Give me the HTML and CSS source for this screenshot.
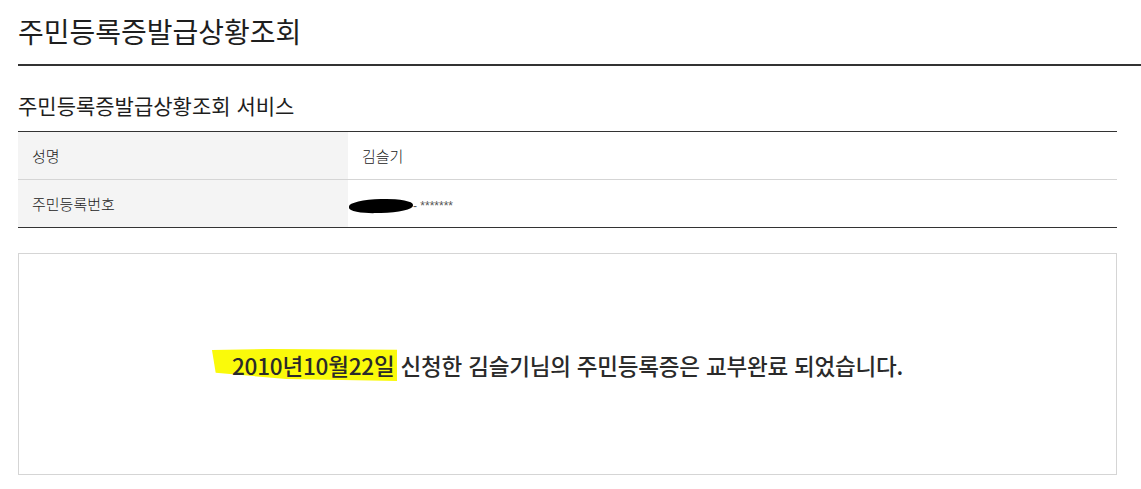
FILE: index.html
```html
<!DOCTYPE html>
<html lang="ko">
<head>
<meta charset="UTF-8">
<meta name="viewport" content="width=device-width, initial-scale=1.0">
<title>주민등록증발급상황조회</title>
<link rel="stylesheet" href="styles.css">
</head>
<body>

<div class="page">
  <h1 class="page-title">주민등록증발급상황조회</h1>

  <div class="content">
    <h2 class="section-title">주민등록증발급상황조회 서비스</h2>

    <table class="info-table">
      <tr>
        <th>성명</th>
        <td>김슬기</td>
      </tr>
      <tr>
        <th>주민등록번호</th>
        <td><span class="redact"></span><span class="masked">- *******</span></td>
      </tr>
    </table>

    <div class="result-box">
      <p class="result-text"><span class="marker">2010년10월22일</span> 신청한 김슬기님의 주민등록증은 교부완료 되었습니다.</p>
    </div>
  </div>
</div>

</body>
</html>
```

FILE: styles.css
```css
/* 주민등록증 발급상황 조회 */
body {
  font-family: "Noto Sans CJK KR", "Noto Sans", sans-serif;
  color: #333;
  background-color: #fff;
  margin: 0;
  padding: 0;
}
.page {
  padding-left: 18px;
}
.page-title {
  margin: 0;
  padding-top: 12px;
  height: 52px;
  font-size: 28px;
  font-weight: 400;
  line-height: 38px;
  color: #1e1e1e;
  border-bottom: 2px solid #333;
  box-sizing: content-box;
}
.content {
  padding-right: 24px;
}
.section-title {
  margin: 0;
  padding-top: 24px;
  height: 41px;
  font-size: 21px;
  font-weight: 400;
  line-height: 30px;
  color: #1e1e1e;
}
.info-table {
  width: 100%;
  border-collapse: collapse;
  border-top: 1px solid #333;
  border-bottom: 1px solid #333;
}
.info-table th,
.info-table td {
  height: 47px;
  padding: 0 14px;
  font-size: 15px;
  font-weight: 300;
  text-align: left;
  color: #222;
  border-bottom: 1px solid #d5d5d5;
}
.info-table tr:last-child th,
.info-table tr:last-child td {
  border-bottom: none;
}
.info-table th {
  width: 302px;
  background-color: #f4f4f4;
}
.redact {
  display: inline-block;
  width: 64px;
  height: 14px;
  margin-left: -13px;
  vertical-align: middle;
  background-color: #000;
  border-radius: 50% 45% 50% 40%;
  transform: rotate(-1deg);
}
.masked {
  font-family: "Liberation Sans", Arial, sans-serif;
  font-size: 12px;
  color: #555;
  vertical-align: middle;
}
.result-box {
  margin-top: 25px;
  height: 220px;
  border: 1px solid #d5d5d5;
  display: flex;
  align-items: center;
  justify-content: center;
}
.result-text {
  position: relative;
  z-index: 0;
  margin: 0;
  padding-top: 2px;
  font-size: 22.5px;
  font-weight: 500;
  color: #2a2a2a;
  letter-spacing: -0.2px;
}
/* 형광펜 표시 */
.marker {
  position: relative;
}
.marker::before {
  content: "";
  position: absolute;
  left: -20px;
  right: -3px;
  top: 0;
  bottom: -2px;
  z-index: -1;
  background-color: #fafa0a;
  clip-path: polygon(0 3%, 30% 0, 100% 2%, 100% 94%, 40% 88%, 2% 70%);
}
```
